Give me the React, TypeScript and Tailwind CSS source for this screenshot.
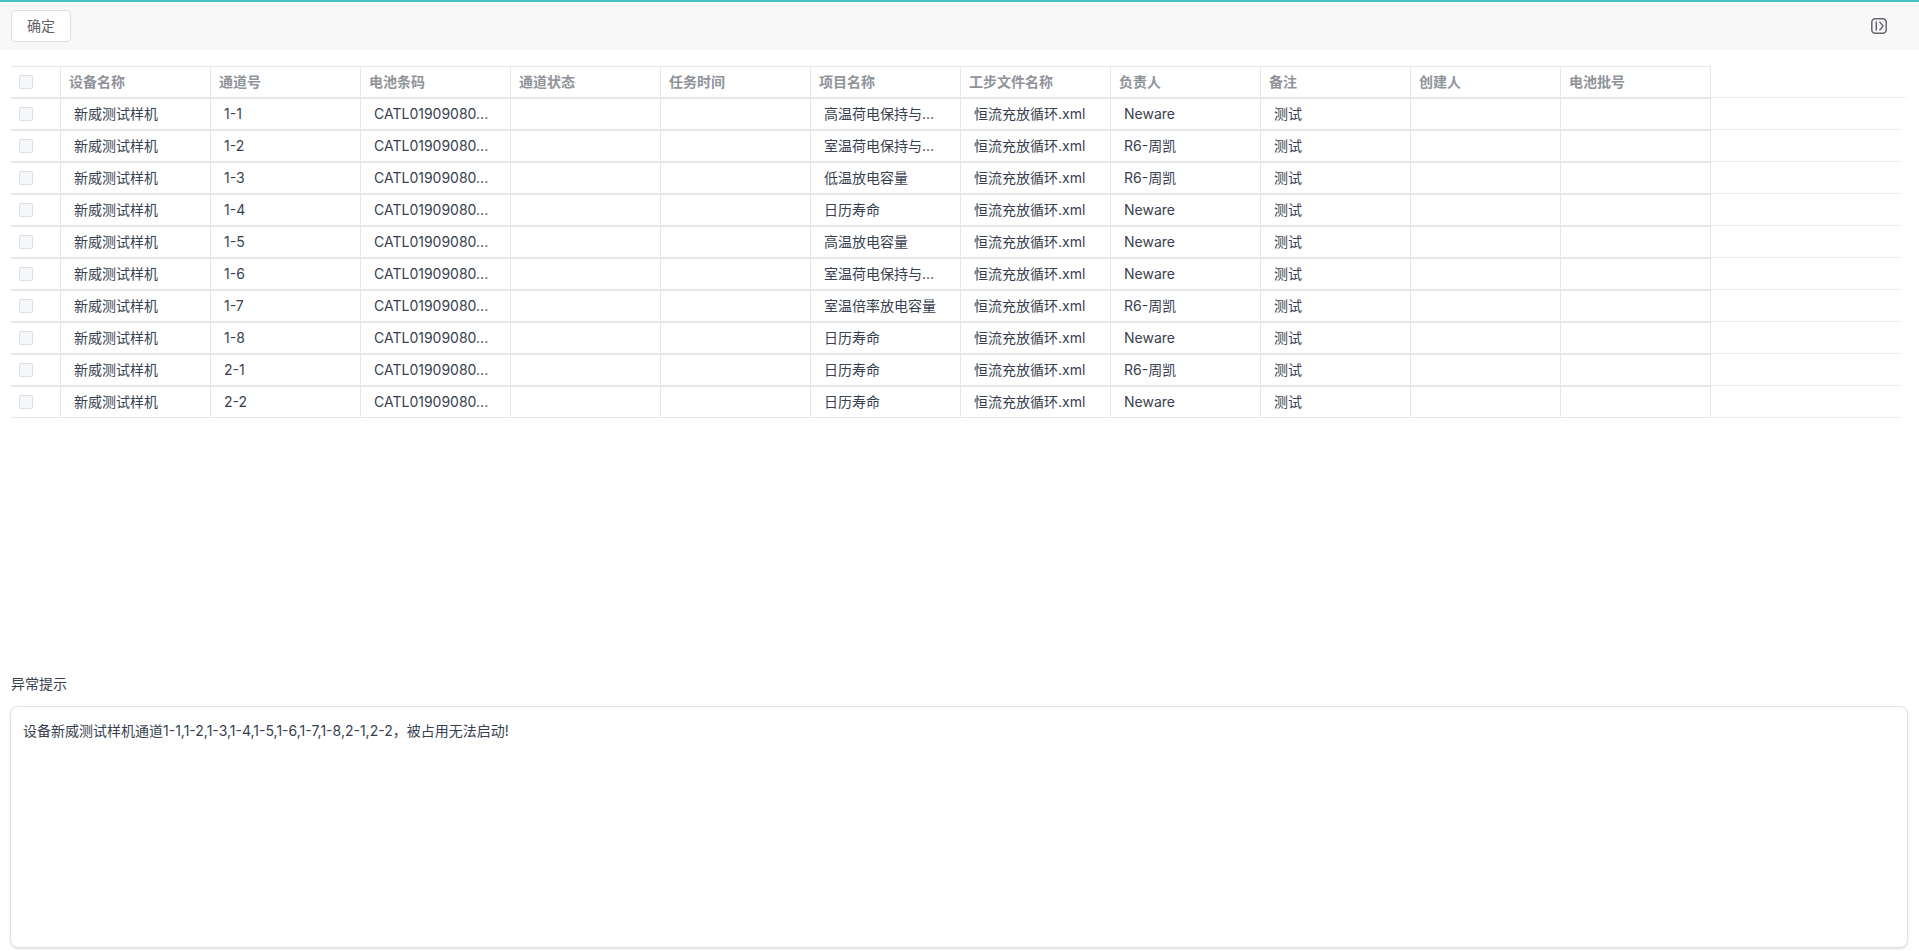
import React, { useState } from 'react';

interface Channel {
  channel: string;
  project: string;
  owner: string;
}

const HEADERS = ['设备名称', '通道号', '电池条码', '通道状态', '任务时间', '项目名称', '工步文件名称', '负责人', '备注', '创建人', '电池批号'];

const CHANNELS: Channel[] = [
  { channel: '1-1', project: '高温荷电保持与...', owner: 'Neware' },
  { channel: '1-2', project: '室温荷电保持与...', owner: 'R6-周凯' },
  { channel: '1-3', project: '低温放电容量', owner: 'R6-周凯' },
  { channel: '1-4', project: '日历寿命', owner: 'Neware' },
  { channel: '1-5', project: '高温放电容量', owner: 'Neware' },
  { channel: '1-6', project: '室温荷电保持与...', owner: 'Neware' },
  { channel: '1-7', project: '室温倍率放电容量', owner: 'R6-周凯' },
  { channel: '1-8', project: '日历寿命', owner: 'Neware' },
  { channel: '2-1', project: '日历寿命', owner: 'R6-周凯' },
  { channel: '2-2', project: '日历寿命', owner: 'Neware' },
];

const toCells = (row: Channel) => [
  '新威测试样机',
  row.channel,
  'CATL01909080...',
  '',
  '',
  row.project,
  '恒流充放循环.xml',
  row.owner,
  '测试',
  '',
  '',
];

const CHECKBOX = 'block size-3.5 appearance-none rounded-xs border border-[#dcdfe6] bg-[#f5f7fa] checked:bg-[#59c9c9]';

const App: React.FC = () => {
  const [selected, setSelected] = useState<string[]>([]);
  const [message, setMessage] = useState('设备新威测试样机通道1-1,1-2,1-3,1-4,1-5,1-6,1-7,1-8,2-1,2-2，被占用无法启动!');

  const toggle = (channel: string) => {
    setSelected(selected.includes(channel) ? selected.filter((c) => c !== channel) : [...selected, channel]);
  };

  const toggleAll = () => {
    setSelected(selected.length === CHANNELS.length ? [] : CHANNELS.map((c) => c.channel));
  };

  return (
    <div className="flex min-h-screen flex-col bg-white font-['Inter','Noto_Sans_CJK_SC',sans-serif] text-sm text-[#383f50]">
      <header className="flex h-[50px] items-center justify-between border-t-2 border-[#48c6c6] bg-[#f8f8f8] pr-8 pl-[11px]">
        <button className="h-8 rounded border border-[#dcdce6] bg-white px-[15px] text-[#606266]">确定</button>
        <button aria-label="展开" className="text-[#64666c]">
          <svg className="size-4" viewBox="0 0 16 16" fill="none" stroke="currentColor" strokeWidth="1.5">
            <rect x="0.8" y="0.8" width="14.4" height="14.4" rx="3.5" />
            <path d="M5.3 3.6v8.8M8.5 3.6l3.6 4.4-3.6 4.4" />
          </svg>
        </button>
      </header>

      <main className="flex flex-1 flex-col">
        <div className="h-[608px] overflow-hidden pt-4 pr-3 pl-[11px]">
          <table className="w-full table-fixed border-separate border-spacing-0">
            <colgroup>
              <col className="w-[50px]" />
              {HEADERS.map((h) => (
                <col key={h} className="w-[150px]" />
              ))}
              <col />
              <col className="w-1.5" />
            </colgroup>
            <thead>
              <tr className="h-8">
                <th className="border-y border-r border-[#e6e6eb] p-0 pl-2">
                  <input type="checkbox" aria-label="全选" className={CHECKBOX} checked={selected.length === CHANNELS.length} onChange={toggleAll} />
                </th>
                {HEADERS.map((h) => (
                  <th key={h} className="border-y border-r border-[#e6e6eb] p-0 pl-2 text-left font-bold text-[#909399]">{h}</th>
                ))}
                <th className="border-b border-[#ebebf0] p-0" />
                <th className="border-b border-[#ebebf0] p-0" />
              </tr>
            </thead>
            <tbody>
              {CHANNELS.map((row) => (
                <tr key={row.channel} className="h-8">
                  <td className="border-y border-r border-[#e6e6eb] p-0 pl-2">
                    <input
                      type="checkbox"
                      aria-label={row.channel}
                      className={CHECKBOX}
                      checked={selected.includes(row.channel)}
                      onChange={() => toggle(row.channel)}
                    />
                  </td>
                  {toCells(row).map((cell, i) => (
                    <td key={HEADERS[i]} className="truncate border-y border-r border-[#e6e6eb] px-[13px] py-0">{cell}</td>
                  ))}
                  <td className="border-b border-[#ebebf0] p-0" />
                  <td className="p-0" />
                </tr>
              ))}
            </tbody>
          </table>
        </div>

        <section className="flex flex-1 flex-col pr-[11px] pb-[3px] pl-2.5">
          <label htmlFor="message" className="flex h-12 items-center pt-1 pl-px">异常提示</label>
          <textarea
            id="message"
            className="flex-1 resize-none rounded-lg border border-[#e2e2e2] bg-white px-3 py-3.5 leading-5 shadow-sm outline-none"
            value={message}
            onChange={(e) => setMessage(e.target.value)}
          />
        </section>
      </main>
    </div>
  );
};

export default App;
